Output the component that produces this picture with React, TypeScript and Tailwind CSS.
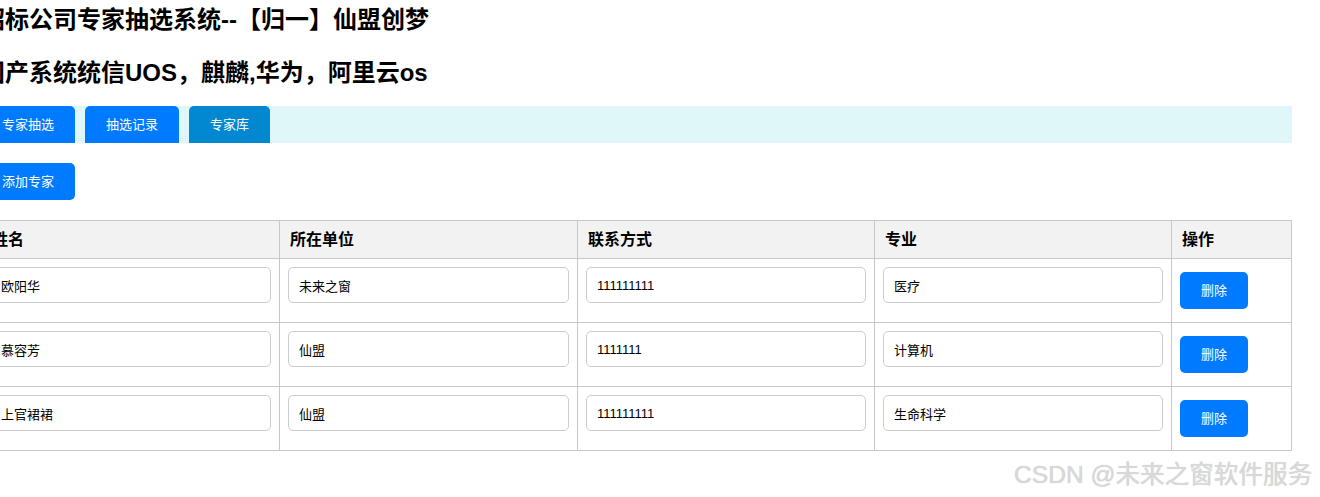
import { useState } from "react";

type Expert = {
  id: number;
  name: string;
  unit: string;
  contact: string;
  major: string;
};

const initialExperts: Expert[] = [
  { id: 1, name: "欧阳华", unit: "未来之窗", contact: "111111111", major: "医疗" },
  { id: 2, name: "慕容芳", unit: "仙盟", contact: "1111111", major: "计算机" },
  { id: 3, name: "上官裙裙", unit: "仙盟", contact: "111111111", major: "生命科学" },
];

const tabs = ["专家抽选", "抽选记录", "专家库"];

const cellBase = "box-border border-r border-b border-[#c8c8c8]";

export default function App() {
  const [experts, setExperts] = useState<Expert[]>(initialExperts);
  const [activeTab, setActiveTab] = useState("专家库");

  const updateField = (id: number, key: keyof Expert, value: string) => {
    setExperts((list) => list.map((e) => (e.id === id ? { ...e, [key]: value } : e)));
  };

  const removeExpert = (id: number) => {
    setExperts((list) => list.filter((e) => e.id !== id));
  };

  const addExpert = () => {
    setExperts((list) => [
      ...list,
      { id: Date.now(), name: "", unit: "", contact: "", major: "" },
    ]);
  };

  return (
    <div className="relative h-[497px] w-[1320px] overflow-hidden bg-white font-['Liberation_Sans','Noto_Sans_CJK_SC',sans-serif] text-black">
      <div className="ml-[-19px] w-[1311px]">
        {/* 标题 */}
        <h2 className="mt-[6px] whitespace-nowrap text-[24px] font-bold leading-[28px]">
          招标公司专家抽选系统--【归一】仙盟创梦
        </h2>
        <h2 className="mt-[25px] whitespace-nowrap text-[24px] font-bold leading-[28px]">
          国产系统统信UOS，麒麟,华为，阿里云os
        </h2>

        {/* 导航 */}
        <div className="mt-[19px] flex h-[37px] gap-[10px] bg-[#e0f7fa]">
          {tabs.map((t) => (
            <button
              key={t}
              onClick={() => setActiveTab(t)}
              className={
                "h-[37px] rounded-t-[5px] px-[21px] text-[13px] leading-[17px] text-white " +
                (activeTab === t ? "bg-[#0288d1]" : "bg-[#007bff]")
              }
            >
              {t}
            </button>
          ))}
        </div>

        <button
          onClick={addExpert}
          className="mt-[20px] h-[37px] rounded-[5px] bg-[#007bff] px-[21px] text-[13px] leading-[17px] text-white"
        >
          添加专家
        </button>

        {/* 专家列表 */}
        <div className="mt-[20px] grid grid-cols-[298px_298px_297px_297px_120px] border-l border-t border-[#c8c8c8]">
          {["姓名", "所在单位", "联系方式", "专业", "操作"].map((h) => (
            <div
              key={h}
              className={cellBase + " h-[38px] bg-[#f2f2f2] px-[10px] py-[10px] text-[16px] font-bold leading-[17px]"}
            >
              {h}
            </div>
          ))}

          {experts.map((e) => (
            <div key={e.id} className="contents">
              {(["name", "unit", "contact", "major"] as const).map((k) => (
                <div key={k} className={cellBase + " flex h-[64px] items-start p-[8px]"}>
                  <input
                    value={e[k]}
                    onChange={(ev) => updateField(e.id, k, ev.target.value)}
                    className="box-border h-[36px] w-full rounded-[5px] border border-[#cccccc] px-[10px] text-[13px] text-black outline-none"
                  />
                </div>
              ))}
              <div className={cellBase + " flex h-[64px] items-center p-[8px]"}>
                <button
                  onClick={() => removeExpert(e.id)}
                  className="h-[37px] rounded-[5px] bg-[#007bff] px-[21px] text-[13px] leading-[17px] text-white"
                >
                  删除
                </button>
              </div>
            </div>
          ))}
        </div>
      </div>

      {/* 水印 */}
      <div className="pointer-events-none absolute left-[1014px] top-[460px] whitespace-nowrap font-['Liberation_Sans','Noto_Sans_CJK_SC',sans-serif] text-[24.6px] font-normal leading-[30px] text-[#d9d9d9] [text-shadow:0_0_1px_#c4c4c4]">
        CSDN @未来之窗软件服务
      </div>
    </div>
  );
}
